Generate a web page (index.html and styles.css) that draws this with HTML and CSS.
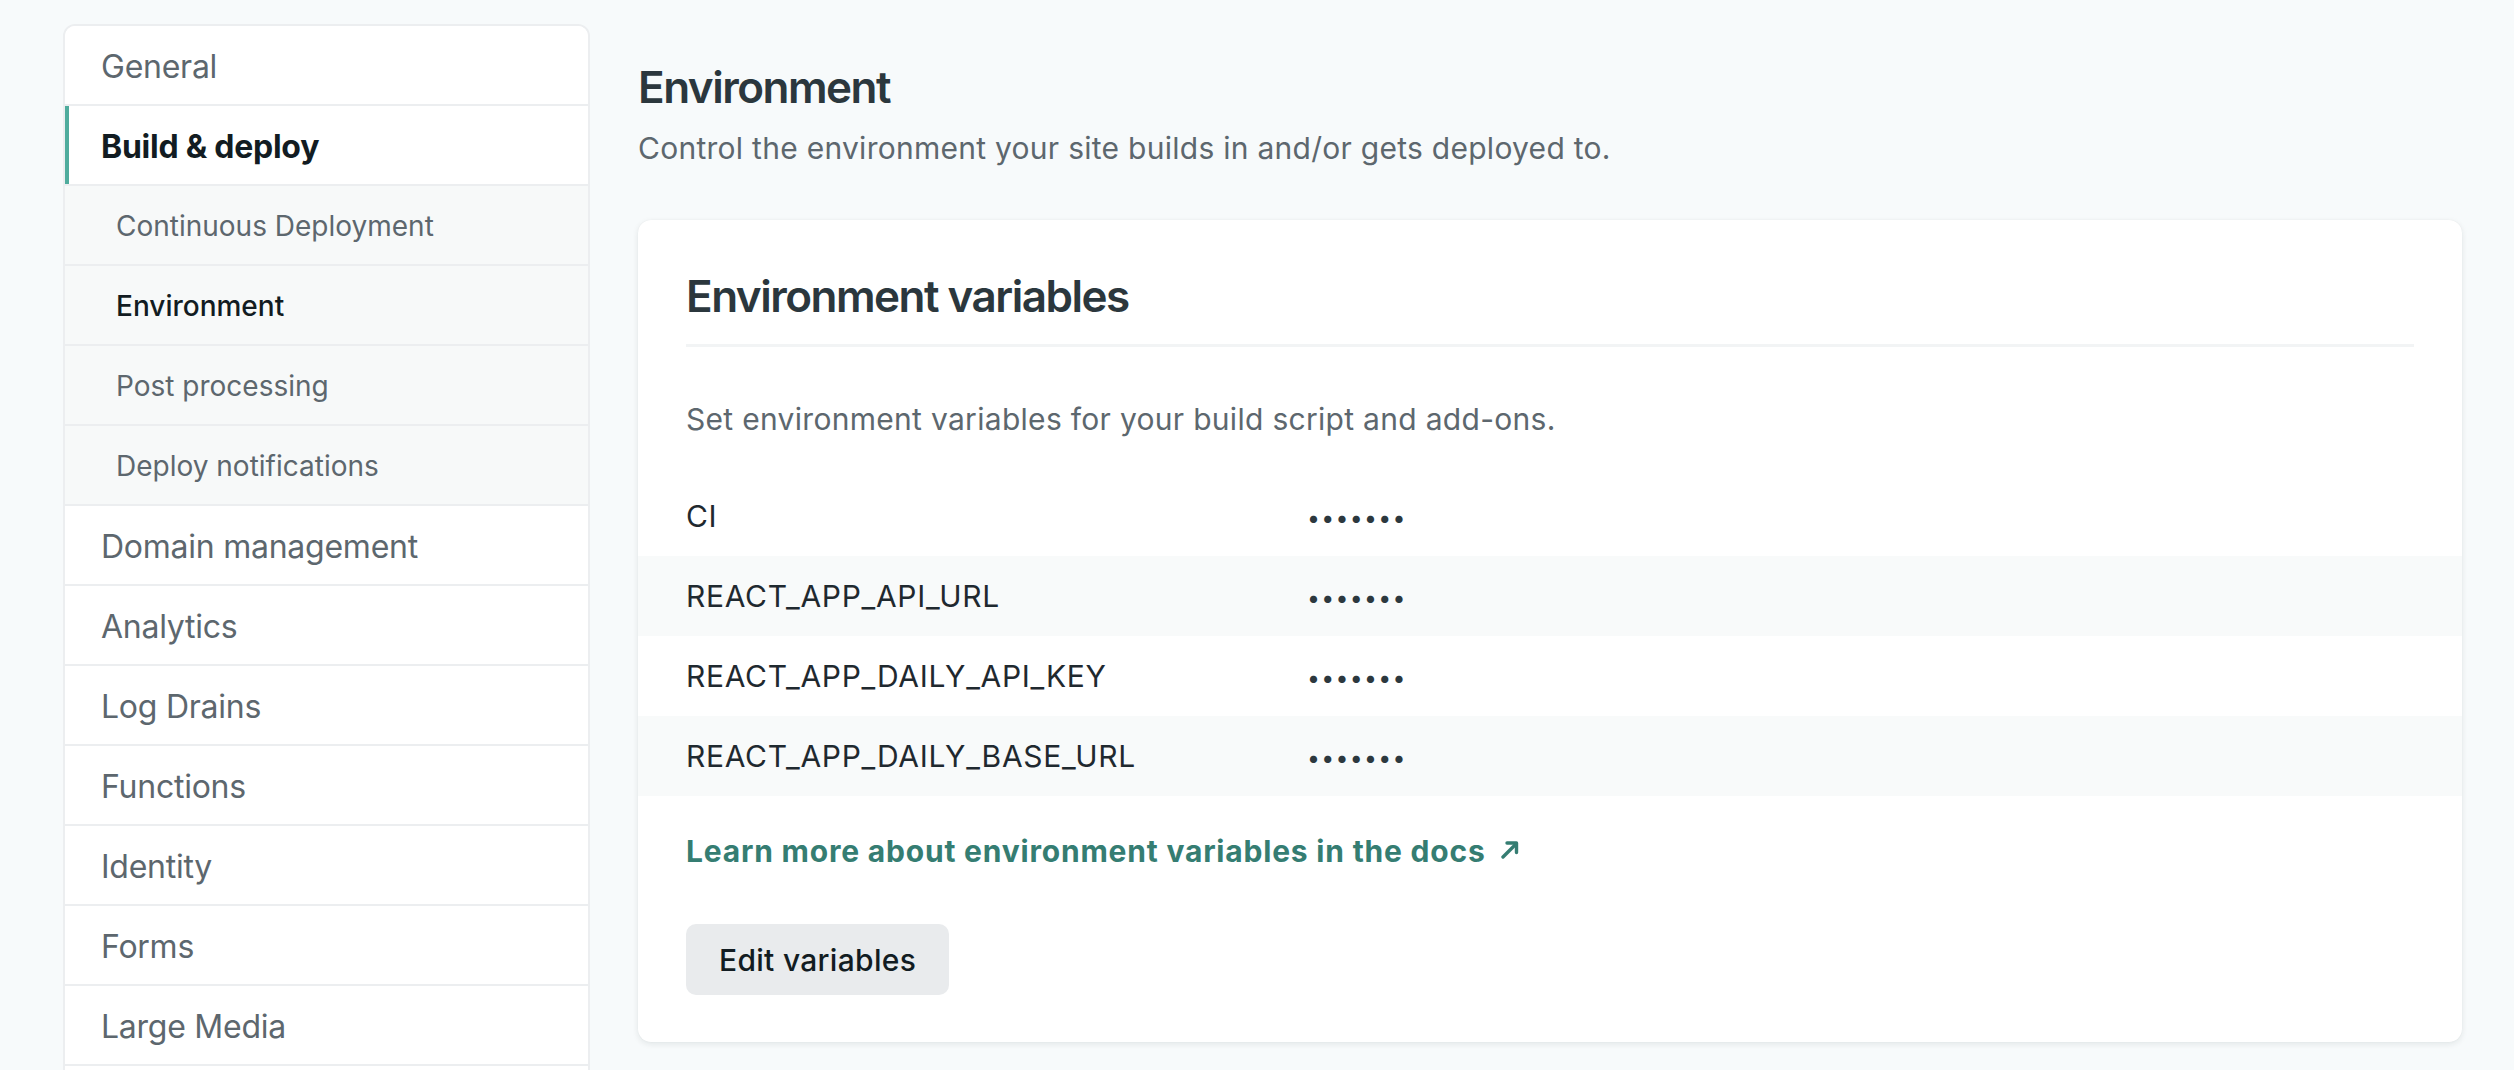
FILE: index.html
```html
<!DOCTYPE html>
<html lang="en">
<head>
<meta charset="utf-8">
<title>Build & deploy – Environment</title>
<link rel="stylesheet" href="styles.css">
</head>
<body>
<div class="page">
  <nav class="sidenav">
    <a class="nav-item">General</a>
    <a class="nav-item active">Build &amp; deploy</a>
    <a class="nav-sub">Continuous Deployment</a>
    <a class="nav-sub current">Environment</a>
    <a class="nav-sub">Post processing</a>
    <a class="nav-sub">Deploy notifications</a>
    <a class="nav-item">Domain management</a>
    <a class="nav-item">Analytics</a>
    <a class="nav-item">Log Drains</a>
    <a class="nav-item">Functions</a>
    <a class="nav-item">Identity</a>
    <a class="nav-item">Forms</a>
    <a class="nav-item">Large Media</a>
  </nav>

  <main class="content">
    <h1 class="page-title">Environment</h1>
    <p class="page-desc">Control the environment your site builds in and/or gets deployed to.</p>

    <section class="card">
      <h2 class="card-title">Environment variables</h2>
      <p class="card-desc">Set environment variables for your build script and add-ons.</p>
      <dl class="vars">
        <div class="var-row"><dt class="var-name">CI</dt><dd class="var-value">•••••••</dd></div>
        <div class="var-row"><dt class="var-name">REACT_APP_API_URL</dt><dd class="var-value">•••••••</dd></div>
        <div class="var-row"><dt class="var-name">REACT_APP_DAILY_API_KEY</dt><dd class="var-value">•••••••</dd></div>
        <div class="var-row"><dt class="var-name">REACT_APP_DAILY_BASE_URL</dt><dd class="var-value">•••••••</dd></div>
      </dl>
      <a class="docs-link">Learn more about environment variables in the docs<svg class="ext-icon" viewBox="0 0 20 20" width="20" height="20" aria-hidden="true"><path d="M3 18 L16 5" fill="none" stroke="currentColor" stroke-width="3.4" stroke-linecap="round"/><path d="M7 4 H16.5 V13.5" fill="none" stroke="currentColor" stroke-width="3.4" stroke-linecap="round" stroke-linejoin="round"/></svg></a>
      <div class="actions"><button class="btn" type="button">Edit variables</button></div>
    </section>
  </main>
</div>
</body>
</html>
```

FILE: styles.css
```css
* { box-sizing: border-box; }

html, body {
  margin: 0;
  height: 100%;
  overflow: hidden;
}

body {
  background: #f7fafb;
  font-family: Inter, "Noto Sans", "Liberation Sans", sans-serif;
  color: #2a363c;
}

.page {
  display: grid;
  grid-template-columns: 527px 1824px;
  column-gap: 48px;
  padding: 24px 0 0 63px;
  align-items: start;
}

/* ---------- Sidebar ---------- */
.sidenav {
  display: flex;
  flex-direction: column;
  background: #ffffff;
  border: 2px solid #eceef0;
  border-radius: 12px;
  overflow: hidden;
  padding-bottom: 60px;
}

.nav-item,
.nav-sub {
  display: flex;
  align-items: center;
  height: 80px;
  padding-top: 2px;
  border-bottom: 2px solid #eceef0;
  color: #5d676e;
  text-decoration: none;
}

.nav-item {
  padding-left: 36px;
  font-size: 32px;
  letter-spacing: -0.25px;
  background: #ffffff;
}

.nav-sub {
  padding-left: 51px;
  font-size: 28px;
  background: #f7f9f9;
}

.nav-item.active {
  color: #121c22;
  font-weight: 700;
  box-shadow: inset 4px 0 0 #4fac9d;
}

.nav-sub.current {
  color: #121c22;
  font-weight: 500;
}

/* ---------- Content ---------- */
.content {
  padding-top: 35px;
}

.page-title {
  margin: 0;
  font-size: 44px;
  line-height: 56px;
  font-weight: 600;
  letter-spacing: -1.5px;
  color: #2b373d;
}

.page-desc {
  margin: 11px 0 0;
  font-size: 30px;
  line-height: 44px;
  letter-spacing: 0.27px;
  color: #5d676e;
}

.card {
  margin-top: 50px;
  background: #ffffff;
  border-radius: 13px;
  box-shadow: 0 2px 6px rgba(14, 30, 37, 0.09), 0 0 1px rgba(14, 30, 37, 0.08);
  padding: 48px 0 47px;
}

.card-title {
  margin: 0 48px;
  padding-bottom: 20px;
  border-bottom: 3px solid #f2f4f5;
  font-size: 44px;
  line-height: 56px;
  font-weight: 600;
  letter-spacing: -1.5px;
  color: #2b373d;
}

.card-desc {
  margin: 50px 48px 35px;
  font-size: 30px;
  line-height: 44px;
  letter-spacing: 0.3px;
  color: #5d676e;
}

.vars {
  margin: 0;
}

.var-row {
  display: grid;
  grid-template-columns: 621px 1fr;
  align-items: center;
  height: 80px;
  padding-left: 48px;
}

.var-row:nth-child(even) {
  background: #f8fafa;
}

.var-name {
  font-size: 30px;
  letter-spacing: 0.7px;
  color: #1f292f;
}

.var-value {
  margin: 0;
  padding-top: 4px;
  font-size: 23px;
  letter-spacing: 1.3px;
  color: #2c383e;
}

.docs-link {
  display: flex;
  align-items: center;
  gap: 14px;
  margin: 33px 48px 0;
  height: 44px;
  font-size: 30px;
  font-weight: 700;
  letter-spacing: 0.8px;
  color: #357d72;
  text-decoration: none;
}

.ext-icon {
  flex: none;
  margin-top: -4px;
}

.actions {
  margin: 51px 48px 0;
}

.btn {
  height: 71px;
  padding: 0 33px;
  border: 0;
  border-radius: 10px;
  background: #e9ebed;
  font-family: inherit;
  font-size: 30px;
  font-weight: 500;
  letter-spacing: 0.3px;
  color: #121c22;
}
```
